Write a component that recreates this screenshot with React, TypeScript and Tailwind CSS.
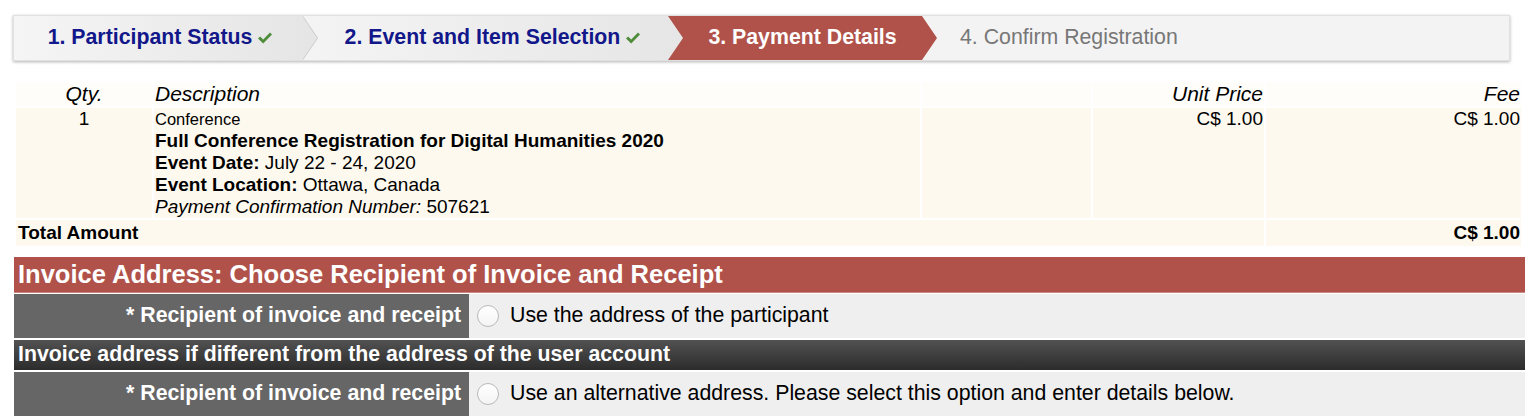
import React from "react";

function Check() {
  return (
    <svg width="16" height="14" viewBox="0 0 16 14" className="ml-[5px] inline-block shrink-0">
      <path d="M1 7.6 3.1 5.6 6.2 8.6 13 1.5 15 3.4 6.2 12.6Z" fill="#4f8d3c" />
    </svg>
  );
}

function Radio() {
  return (
    <span className="inline-block h-[22px] w-[22px] shrink-0 rounded-full border border-[#b9b9b9] bg-linear-to-b from-white to-[#f4f4f4]" />
  );
}

function ChoiceRow({ label, text }: { label: string; text: string }) {
  return (
    <div className="flex h-[44px]">
      <div className="flex w-[455px] shrink-0 items-center justify-end bg-[#666666] pr-[8px] text-[21.3px] font-bold text-white">
        {label}
      </div>
      <div className="flex flex-1 items-center bg-[#efefef] pl-[8px] text-[21.3px] text-black">
        <Radio />
        <span className="ml-[11px]">{text}</span>
      </div>
    </div>
  );
}

export default function App() {
  return (
    <div className="min-h-[417px] bg-white pt-[15px] font-['Liberation_Sans',Arial,sans-serif]">
      {/* Steps */}
      <div className="ml-[13px] flex h-[46px] w-[1497px] border border-[#e0e0e0] bg-[#f3f3f3] text-[21.3px] shadow-[0_1px_3px_rgba(0,0,0,0.3)]">
        <div className="relative z-20 -mr-[15px] flex w-[304px] shrink-0 items-center justify-center bg-linear-to-r from-[#f5f5f5] to-[#e5e5e5] pl-[4px] pr-[15px] font-bold text-[#12178a] [clip-path:polygon(0_0,289px_0,304px_50%,289px_100%,0_100%)]">
          1. Participant Status
          <Check />
          <svg className="absolute right-0 top-0 h-full w-[15px]" viewBox="0 0 15 44" preserveAspectRatio="none">
            <polyline points="0,0 15,22 0,44" fill="none" stroke="#cbcbcb" strokeWidth="1.5" />
          </svg>
        </div>
        <div className="relative z-10 flex w-[380px] shrink-0 items-center justify-center bg-linear-to-r from-[#f4f4f4] to-[#e6e6e6] px-[15px] font-bold text-[#12178a]">
          2. Event and Item Selection
          <Check />
        </div>
        <div className="relative z-20 -ml-[15px] flex w-[269px] shrink-0 items-center justify-center bg-[#b0524a] px-[15px] font-bold text-white [clip-path:polygon(0_0,254px_0,269px_50%,254px_100%,0_100%,15px_50%)]">
          3. Payment Details
        </div>
        <div className="flex flex-1 items-center pl-[23px] text-[#777777]">
          4. Confirm Registration
        </div>
      </div>

      {/* Items */}
      <table className="ml-[14px] mt-[19px] w-[1509px] table-fixed border-separate border-spacing-[2px] text-[19px] leading-[22px] text-black">
        <colgroup>
          <col className="w-[136px]" />
          <col className="w-[766px]" />
          <col className="w-[169px]" />
          <col className="w-[171px]" />
          <col className="w-[255px]" />
        </colgroup>
        <thead>
          <tr className="bg-[#fffdf9] text-[21px] leading-[24px]">
            <th className="text-center font-normal italic">Qty.</th>
            <th className="pl-[1px] text-left font-normal italic">Description</th>
            <th />
            <th className="pr-[1px] text-right font-normal italic">Unit Price</th>
            <th className="pr-[1px] text-right font-normal italic">Fee</th>
          </tr>
        </thead>
        <tbody>
          <tr className="bg-[#fef9ee] align-top">
            <td className="text-center">1</td>
            <td className="pl-[1px]">
              <div className="text-[16.5px]">Conference</div>
              <div className="font-bold">Full Conference Registration for Digital Humanities 2020</div>
              <div>
                <b>Event Date:</b> July 22 - 24, 2020
              </div>
              <div>
                <b>Event Location:</b> Ottawa, Canada
              </div>
              <div>
                <i>Payment Confirmation Number:</i> 507621
              </div>
            </td>
            <td />
            <td className="pr-[1px] text-right">C$ 1.00</td>
            <td className="pr-[1px] text-right">C$ 1.00</td>
          </tr>
          <tr className="bg-[#fef9ee] leading-[26px]">
            <td colSpan={4} className="pl-[2px] font-bold">
              Total Amount
            </td>
            <td className="pr-[1px] text-right font-bold">C$ 1.00</td>
          </tr>
        </tbody>
      </table>

      {/* Invoice address */}
      <div className="ml-[14px] mt-[9px] w-[1511px]">
        <div className="flex h-[36px] items-center border-b border-[#c98a84] bg-[#b0524a] pl-[4px] text-[25.5px] font-bold text-white">
          Invoice Address: Choose Recipient of Invoice and Receipt
        </div>
        <div className="mt-[1px]">
          <ChoiceRow label="* Recipient of invoice and receipt" text="Use the address of the participant" />
        </div>
        <div className="mt-[2px] flex h-[30px] items-center bg-linear-to-b from-[#525252] to-[#2c2c2c] pl-[4px] text-[21.3px] font-bold text-white">
          Invoice address if different from the address of the user account
        </div>
        <div className="mt-[2px]">
          <ChoiceRow
            label="* Recipient of invoice and receipt"
            text="Use an alternative address. Please select this option and enter details below."
          />
        </div>
      </div>
    </div>
  );
}
